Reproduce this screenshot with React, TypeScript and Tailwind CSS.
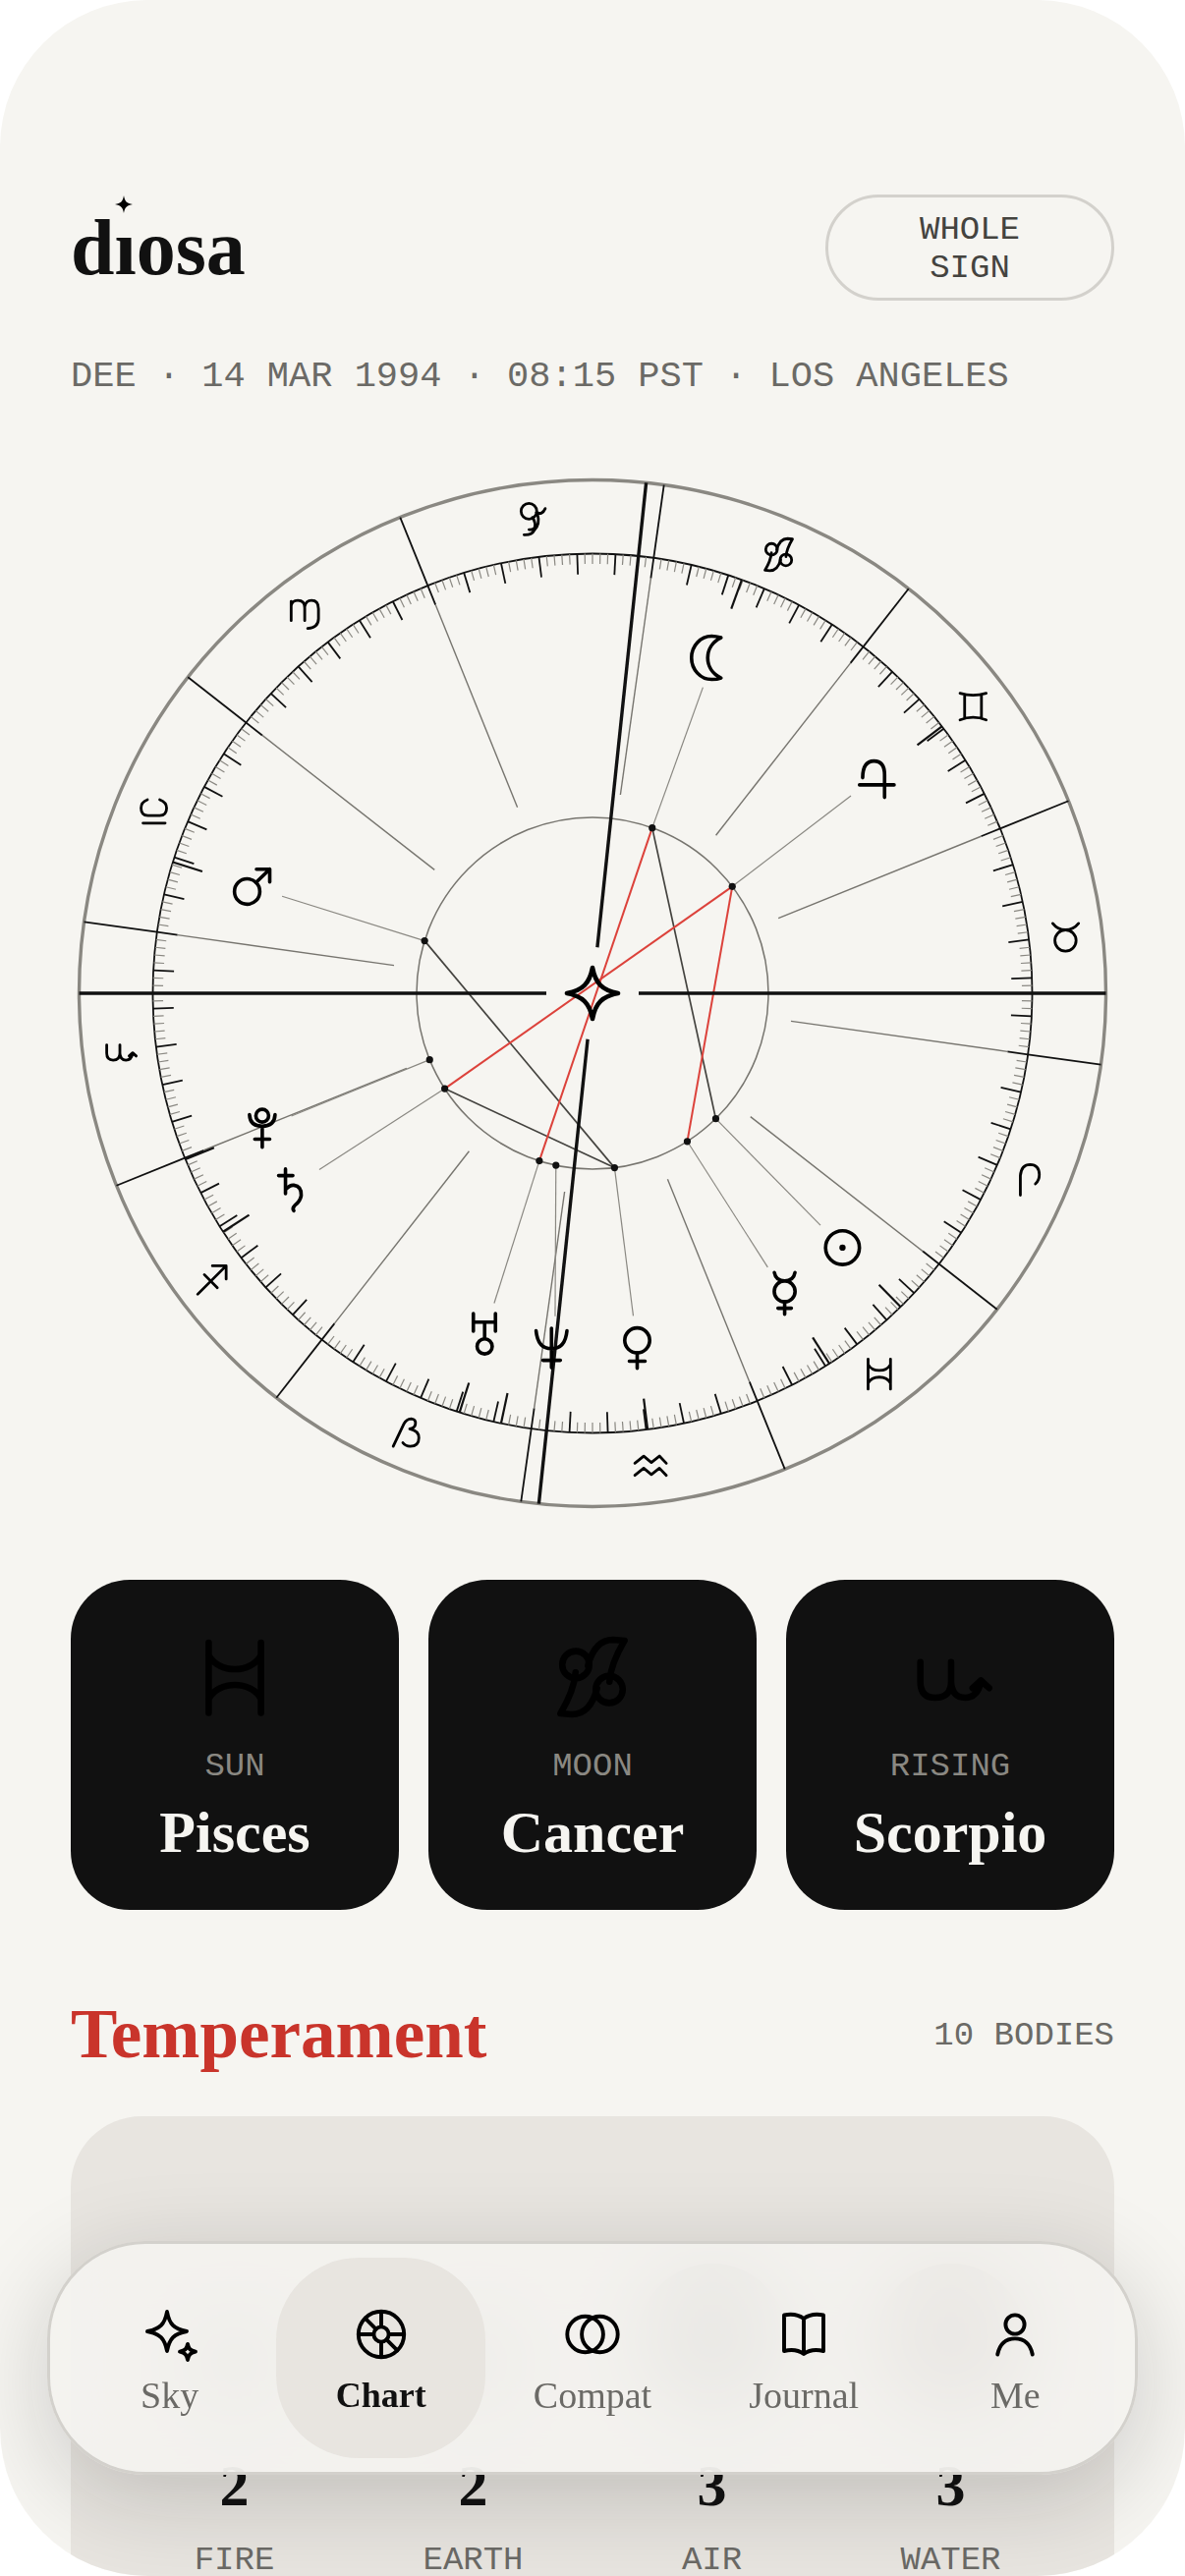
import React from "react";

const SERIF = "font-['Liberation_Serif',serif]";
const MONO = "font-['Liberation_Mono',monospace]";

/* ---------- Zodiac glyphs, drawn around (0,0) in a 36-unit box ---------- */

const SIGNS: Record<string, React.ReactNode> = {
  aries: <path d="M-11 16V-4Q-10 -15.2 -1 -15.2Q8 -15 8.3 -5Q8.3 1 4.3 4.5" />,
  taurus: (
    <>
      <circle cx="0" cy="5.4" r="10.8" />
      <path d="M-13 -12Q-8 -5.4 0 -5.4Q8 -5.4 13.3 -12" />
    </>
  ),
  gemini: <path d="M-13.3 -13.5Q0 -9.5 13.3 -13.5M-13.3 13.6Q0 8.5 13.3 13.6M-8.6 -12V12M8.5 -12V12" />,
  cancer: (
    <>
      <circle cx="-7.3" cy="-5.4" r="5.9" />
      <circle cx="7.3" cy="5.4" r="5.9" />
      <path d="M-2 -5Q1 -16.3 9 -16.3L14 -15.9Q8 -6 7.4 2" />
      <path d="M2 5Q-1 16.3 -9 16.3L-14 15.9Q-8 6 -7.4 -2" />
    </>
  ),
  leo: (
    <>
      <circle cx="-5.6" cy="-9.3" r="8" />
      <path d="M2 -8Q8 -5 11 -12M-2 -3Q2 3 0 8Q-3 10 -5.5 9.5M3 -7C5 0 4 6 0 10C-2 14 -5 15 -10.5 14.7" />
    </>
  ),
  virgo: (
    <path d="M-14.8 -11.5V8M-14.8 -7Q-14 -12.5 -8 -12.5Q-1 -12.5 -1 -5V8M-1 -6Q0 -12.5 6 -12.5Q13 -12.5 13 -4V6Q13 15 2 16" />
  ),
  libra: <path d="M-6.5 -7.5Q-13 -5 -13 1Q-13 8.5 -6 8.7H6Q13 8.5 13 1Q13 -5 6 -7.5M-11 16.3H11.5" />,
  scorpio: (
    <path d="M-13 -6.5V2Q-13 9 -6.5 9Q0.4 9 0.4 2V-6.5M0.4 2Q0.8 9 6.5 9Q12 9 13.4 2M9.8 4.8L13.4 1.5L17 4.8" />
  ),
  sagittarius: <path d="M-14.5 14.5L14.5 -14.5M0.5 -14.5H14.5V-1M-7.7 -5.5L5.5 7.8" />,
  capricorn: (
    <path d="M-13.3 14.7L-2.5 -8Q0 -13.2 5 -13.4Q10 -13 9.3 -8Q9 -4 3.5 -3Q12.8 -1 12.8 6Q12.8 14.5 4 14.7Q-1 14.5 -3.5 11" />
  ),
  aquarius: <path d="M-16 -3L-7 -10.3L0.8 -3.8L9 -10.3L16 -3M-16 9.3L-7 2L0.8 8.5L9 2L16 9.3" />,
  pisces: <path d="M-11.4 -15V15.6M11.4 -15V15.6M-11.4 -9.5C-7 -1.4 7 -1.4 11.4 -9.5M-11.4 9.5C-7 1.4 7 1.4 11.4 9.5" />,
};

/* ---------- Planet glyphs, drawn around (0,0) ---------- */

const PLANETS: Record<string, React.ReactNode> = {
  sun: (
    <>
      <circle r="17.2" />
      <circle r="3.2" fill="#000" stroke="none" />
    </>
  ),
  moon: <path d="M7.5 -20.5Q2 -22 -2 -22A20.5 22 0 0 0 -2 22Q4 22 7.5 20.5C-10.5 12 -10.5 -12 7.5 -20.5Z" />,
  mercury: (
    <>
      <circle cy="-2.4" r="10.6" />
      <path d="M-10.5 -21.5Q-9 -13 0 -13Q9 -13 10.5 -21.5M0 8.3V21M-6.8 14.8H6.8" />
    </>
  ),
  venus: (
    <>
      <circle cy="-6.8" r="12.7" />
      <path d="M0 6V21.5M-8 14.3H8" />
    </>
  ),
  mars: (
    <>
      <circle cx="-5" cy="4.7" r="12.9" />
      <path d="M4 -4.5L18 -18M4.5 -18H18V-5" />
    </>
  ),
  jupiter: <path d="M-13.5 1Q-13.5 -16 -2 -16Q8.8 -16 8.8 -2V21M-16.7 8.3H18.5" />,
  saturn: <path d="M-7.5 -18V7M-14.5 -11.3H0M-7.5 3Q-3 -2 1 -1.5Q9 -0.5 8.5 9Q7.5 15 2 19Q-1 22 1 24.5" />,
  uranus: (
    <>
      <path d="M-11.5 -20V-2M11 -20V-2M-11.5 -11.3H11M0 -11V5.5" />
      <circle cy="13.4" r="7.7" />
    </>
  ),
  neptune: <path d="M-15.7 -17Q-14 1.2 0 1.2Q14 1.2 15.7 -17M0 -19.5V20.5M-8.7 13H9" />,
  pluto: (
    <>
      <circle cy="-12.5" r="6.5" />
      <path d="M-13 -13.5Q-12.5 -1.8 0 -1.8Q12.5 -1.8 13 -13.5M0 -1.8V19.5M-7.6 11.4H7.6" />
    </>
  ),
};

/* ---------- Chart geometry ---------- */

const C = 531;
const R_OUTER = 522.5;
const R_ZODIAC = 447.5;
const R_SIGN = 485;
const R_PLANET = 363;
const R_INNER = 179;
const FIRST_CUSP = 172;
const MC = 84;

const point = (deg: number, r: number) => {
  const a = (deg * Math.PI) / 180;
  return { x: C + r * Math.cos(a), y: C - r * Math.sin(a) };
};

function Ray({ deg, from, to, toDeg = deg, color, width }: {
  deg: number;
  from: number;
  to: number;
  toDeg?: number;
  color: string;
  width: number;
}) {
  const a = point(deg, from);
  const b = point(toDeg, to);
  return <line x1={a.x} y1={a.y} x2={b.x} y2={b.y} stroke={color} strokeWidth={width} />;
}

const WHEEL = [
  "scorpio", "sagittarius", "capricorn", "aquarius", "pisces", "aries",
  "taurus", "gemini", "cancer", "leo", "virgo", "libra",
];

const BODIES: { name: string; at: number; glyphAt?: number }[] = [
  { name: "sun", at: 314.5 },
  { name: "moon", at: 70.15 },
  { name: "mercury", at: 302.6 },
  { name: "venus", at: 277.2 },
  { name: "mars", at: 162.65 },
  { name: "jupiter", at: 37.38 },
  { name: "saturn", at: 212.85 },
  { name: "uranus", at: 252.4 },
  { name: "neptune", at: 258, glyphAt: 263.4 },
  { name: "pluto", at: 202.2 },
];

const ASPECTS: [string, string, boolean][] = [
  ["moon", "sun", false],
  ["mars", "venus", false],
  ["saturn", "venus", false],
  ["moon", "uranus", true],
  ["jupiter", "saturn", true],
  ["jupiter", "mercury", true],
];

const STAR = "M0 -26C3 -10 10 -3 26 0C10 3 3 10 0 26C-3 10 -10 3 -26 0C-10 -3 -3 -10 0 -26Z";

function NatalChart() {
  const position = (name: string) => point(BODIES.find((b) => b.name === name)!.at, R_INNER);
  return (
    <svg viewBox="0 0 1062 1062" className="block w-full" role="img" aria-label="Natal chart wheel" fill="none">
      <circle cx={C} cy={C} r={R_OUTER} stroke="#8a8882" strokeWidth="3.4" />
      <circle cx={C} cy={C} r={R_ZODIAC} stroke="#111" strokeWidth="1.8" />
      <circle cx={C} cy={C} r={R_INNER} stroke="#77756f" strokeWidth="1.5" />

      {Array.from({ length: 360 }, (_, i) =>
        i % 5 === 0 ? (
          <Ray key={i} deg={FIRST_CUSP + i} from={R_ZODIAC} to={426.5} color="#111" width={1.8} />
        ) : (
          <Ray key={i} deg={FIRST_CUSP + i} from={R_ZODIAC} to={437} color="#8a8882" width={1.2} />
        ),
      )}

      {WHEEL.map((sign, i) => (
        <g key={sign}>
          <Ray deg={FIRST_CUSP + i * 30} from={R_OUTER} to={R_ZODIAC} color="#111" width={1.8} />
          <Ray deg={FIRST_CUSP + i * 30} from={426.5} to={204} color="#77756f" width={1.4} />
        </g>
      ))}

      {ASPECTS.map(([a, b, hard]) => {
        const p = position(a);
        const q = position(b);
        return (
          <line
            key={a + b}
            x1={p.x}
            y1={p.y}
            x2={q.x}
            y2={q.y}
            stroke={hard ? "#dc423b" : "#44433f"}
            strokeWidth={hard ? 2 : 1.7}
          />
        );
      })}

      {BODIES.map(({ name, at, glyphAt = at }) => {
        const dot = point(at, R_INNER);
        return (
          <g key={name}>
            <Ray deg={at} from={R_ZODIAC} to={416} color="#111" width={2.2} />
            <Ray deg={at} from={R_INNER} to={331} toDeg={glyphAt} color="#8a8882" width={1.2} />
            <circle cx={dot.x} cy={dot.y} r="3.6" fill="#111" />
          </g>
        );
      })}

      {[0, 180, MC, MC + 180].map((deg) => (
        <Ray key={deg} deg={deg} from={R_OUTER} to={47} color="#111" width={3.4} />
      ))}

      <g stroke="#000" strokeLinecap="round" strokeLinejoin="round">
        {WHEEL.map((sign, i) => {
          const p = point(FIRST_CUSP + i * 30 + 15, R_SIGN);
          return (
            <g key={sign} transform={`translate(${p.x} ${p.y})`} strokeWidth="2.8">
              {SIGNS[sign]}
            </g>
          );
        })}
        {BODIES.map(({ name, at, glyphAt = at }) => {
          const p = point(glyphAt, R_PLANET);
          return (
            <g key={name} transform={`translate(${p.x} ${p.y})`} strokeWidth="3.6">
              {PLANETS[name]}
            </g>
          );
        })}
        <path d={STAR} transform={`translate(${C} ${C})`} strokeWidth="4.6" />
      </g>
    </svg>
  );
}

/* ---------- Header ---------- */

function Header() {
  return (
    <header className="flex items-center justify-between">
      <h1 className={`relative text-[80px] leading-[80px] font-bold ${SERIF}`} aria-label="diosa">
        dıosa
        <svg viewBox="-10 -10 20 20" className="absolute -top-[14px] left-11 size-5" aria-hidden="true">
          <path d="M0 -9C1 -3 3 -1 9 0C3 1 1 3 0 9C-1 3 -3 1 -9 0C-3 -1 -1 -3 0 -9Z" fill="#000" />
        </svg>
      </h1>
      <button
        type="button"
        className={`w-[294px] rounded-full border-3 border-[#d3d1cc] pt-[14px] pb-[10px] text-center text-[34px] leading-[39px] text-[#44433f] ${MONO}`}
      >
        WHOLE
        <br />
        SIGN
      </button>
    </header>
  );
}

/* ---------- Placement cards ---------- */

const PLACEMENTS = [
  { label: "SUN", sign: "pisces", name: "Pisces" },
  { label: "MOON", sign: "cancer", name: "Cancer" },
  { label: "RISING", sign: "scorpio", name: "Scorpio" },
];

function Placements() {
  return (
    <section className="mt-[66px] grid grid-cols-3 gap-[30px]">
      {PLACEMENTS.map((p) => (
        <article
          key={p.label}
          className="flex flex-col items-center rounded-[60px] bg-[#111] pt-[57px] pb-[43px]"
        >
          <svg
            viewBox="-18 -18 36 36"
            className="size-[84px] overflow-visible"
            fill="none"
            stroke="#000"
            strokeWidth="2.8"
            strokeLinecap="round"
            strokeLinejoin="round"
            aria-hidden="true"
          >
            {SIGNS[p.sign]}
          </svg>
          <p className={`mt-7 text-[34px] leading-[42px] text-[#8a8882] ${MONO}`}>{p.label}</p>
          <h2 className={`mt-[10px] text-[60px] leading-[72px] font-bold text-[#f6f5f1] ${SERIF}`}>{p.name}</h2>
        </article>
      ))}
    </section>
  );
}

/* ---------- Temperament ---------- */

const ELEMENTS = [
  { label: "FIRE", count: 2, orb: "size-[100px] bg-[#b5b2ac]" },
  { label: "EARTH", count: 2, orb: "size-[100px] bg-[#b5b2ac]" },
  { label: "AIR", count: 3, orb: "size-[150px] bg-[#8d8b86]" },
  { label: "WATER", count: 3, orb: "size-[150px] bg-[#8f827d]" },
];

function Temperament() {
  return (
    <section>
      <div className="mt-[84px] flex items-center justify-between">
        <h2 className={`text-[71px] leading-[84px] font-bold text-[#c9342b] ${SERIF}`}>Temperament</h2>
        <p className={`pt-1 text-[34px] leading-[42px] text-[#6b6a66] ${MONO}`}>10 BODIES</p>
      </div>
      <div className="mt-[42px] grid grid-cols-4 gap-[30px] rounded-[72px] bg-[#e8e5e0] p-[60px]">
        {ELEMENTS.map((e) => (
          <div key={e.label} className="flex flex-col items-center">
            <div className="flex h-[240px] items-end">
              <div className={`rounded-full ${e.orb}`} />
            </div>
            <p className={`mt-10 text-[60px] leading-[72px] font-bold ${SERIF}`}>{e.count}</p>
            <p className={`mt-6 text-[34px] leading-8 text-[#6b6a66] ${MONO}`}>{e.label}</p>
          </div>
        ))}
      </div>
    </section>
  );
}

/* ---------- Tab bar ---------- */

const TABS: { label: string; icon: React.ReactNode; active?: boolean }[] = [
  {
    label: "Sky",
    icon: (
      <>
        <path d="M-3 -23C-0.5 -10 4 -5.5 17 -3C4 -0.5 -0.5 4 -3 17C-5.5 4 -10 -0.5 -23 -3C-10 -5.5 -5.5 -10 -3 -23Z" />
        <path d="M18 10C19 15 20.5 16.5 26 17.7C20.5 19 19 20.5 18 26C17 20.5 15.5 19 10 17.7C15.5 16.5 17 15 18 10Z" />
      </>
    ),
  },
  {
    label: "Chart",
    active: true,
    icon: (
      <>
        <circle r="23.2" />
        <circle r="7.6" />
        <path d="M0 -23V-8M0 8V23M-23 0H-8M8 0H23M-16.4 -16.4L-5.4 -5.4M5.4 5.4L16.4 16.4" />
      </>
    ),
  },
  {
    label: "Compat",
    icon: (
      <>
        <circle cx="-7.4" r="18.3" />
        <circle cx="7.4" r="18.3" />
      </>
    ),
  },
  {
    label: "Journal",
    icon: <path d="M0 -16Q-8 -22 -20 -19.5V17Q-8 14 0 20Q8 14 20 17V-19.5Q8 -22 0 -16V20" />,
  },
  {
    label: "Me",
    icon: (
      <>
        <circle cy="-10" r="9.6" />
        <path d="M-17.8 20.5Q-14.5 4.4 0 4.4Q14.5 4.4 17.8 20.5" />
      </>
    ),
  },
];

function TabBar() {
  return (
    <nav className="absolute inset-x-12 bottom-[103px] grid grid-cols-5 gap-x-[2px] rounded-[100px] border-3 border-[#d3d1cc] bg-[#f4f3ef]/90 px-[15px] py-[14px] shadow-[0_24px_96px_rgba(17,17,17,0.18)] backdrop-blur-[40px]">
      {TABS.map((t) => (
        <button
          key={t.label}
          type="button"
          aria-current={t.active ? "page" : undefined}
          className={`flex flex-col items-center rounded-[84px] pt-12 pb-[43px] ${
            t.active ? "bg-[#e8e5e0]" : ""
          }`}
        >
          <svg
            viewBox="-30 -30 60 60"
            className="size-[60px]"
            fill="none"
            stroke="#000"
            strokeWidth="3.9"
            strokeLinecap="round"
            strokeLinejoin="round"
            aria-hidden="true"
          >
            {t.icon}
          </svg>
          <span
            className={`mt-[11px] leading-[42px] ${SERIF} ${
              t.active ? "text-[36px] font-bold text-[#111]" : "text-[38px] text-[#6b6a66]"
            }`}
          >
            {t.label}
          </span>
        </button>
      ))}
    </nav>
  );
}

export default function App() {
  return (
    <div className="bg-white">
      <main className="relative h-screen overflow-hidden rounded-[150px] bg-[#f6f5f1] px-[72px] pt-[198px] text-[#111]">
        <Header />
        <p className={`mt-[53px] text-[37px] leading-[48px] text-[#6b6a66] ${MONO}`}>
          DEE · 14 MAR 1994 · 08:15 PST · LOS ANGELES
        </p>
        <div className="mt-[73px]">
          <NatalChart />
        </div>
        <Placements />
        <Temperament />
        <TabBar />
      </main>
    </div>
  );
}
